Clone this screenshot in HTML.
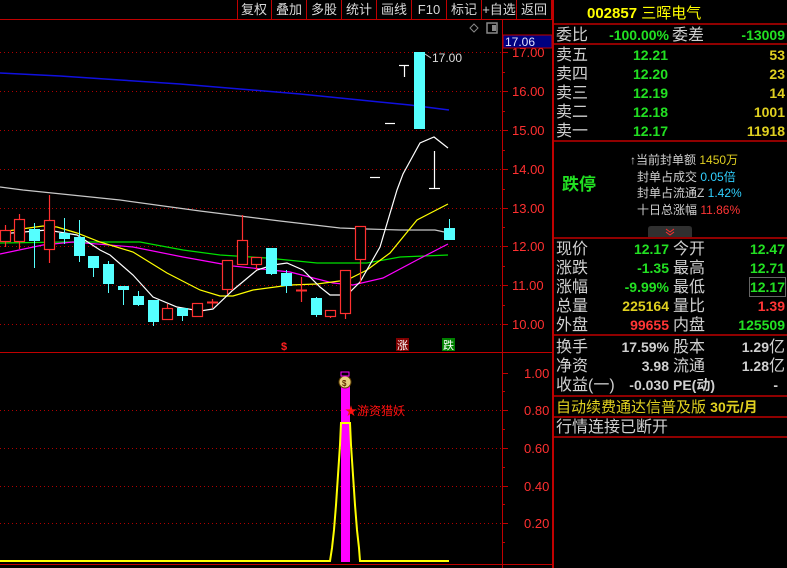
<!DOCTYPE html>
<html><head><meta charset="utf-8"><style>
html,body{margin:0;padding:0;background:#000;width:787px;height:568px;overflow:hidden}
svg{display:block}
text{font-family:"Liberation Sans","Noto Sans CJK SC",sans-serif}
</style></head><body>
<svg width="787" height="568" viewBox="0 0 787 568" xmlns="http://www.w3.org/2000/svg">
<rect width="787" height="568" fill="#000"/>
<!-- toolbar -->
<g stroke="#c00000" stroke-width="1" fill="none">
<line x1="0" y1="19.5" x2="553" y2="19.5"/>
<line x1="237.5" y1="0" x2="237.5" y2="19"/><line x1="271.5" y1="0" x2="271.5" y2="19"/><line x1="306.5" y1="0" x2="306.5" y2="19"/><line x1="341.5" y1="0" x2="341.5" y2="19"/><line x1="376.5" y1="0" x2="376.5" y2="19"/><line x1="411.5" y1="0" x2="411.5" y2="19"/><line x1="446.5" y1="0" x2="446.5" y2="19"/><line x1="481.5" y1="0" x2="481.5" y2="19"/><line x1="516.5" y1="0" x2="516.5" y2="19"/><line x1="551.5" y1="0" x2="551.5" y2="19"/>
</g>
<g fill="#d8d8d8" font-size="13" text-anchor="middle">
<text x="254" y="14">复权</text><text x="289" y="14">叠加</text><text x="324" y="14">多股</text><text x="359" y="14">统计</text><text x="394" y="14">画线</text><text x="429" y="14">F10</text><text x="464" y="14">标记</text><text x="499" y="14">+自选</text><text x="534" y="14">返回</text>
</g>
<!-- axis -->
<line x1="502.5" y1="20" x2="502.5" y2="568" stroke="#c00000"/>
<line x1="553" y1="0" x2="553" y2="568" stroke="#c00000" stroke-width="2"/>
<line x1="0" y1="352.5" x2="553" y2="352.5" stroke="#c00000"/>
<line x1="0" y1="564.5" x2="553" y2="564.5" stroke="#c00000"/>
<!-- grid dotted -->
<g stroke="#b00000" stroke-dasharray="1,3">
<line x1="0" y1="52.5" x2="502" y2="52.5"/><line x1="0" y1="91.5" x2="502" y2="91.5"/><line x1="0" y1="130.5" x2="502" y2="130.5"/><line x1="0" y1="169.5" x2="502" y2="169.5"/><line x1="0" y1="208.5" x2="502" y2="208.5"/><line x1="0" y1="246.5" x2="502" y2="246.5"/><line x1="0" y1="285.5" x2="502" y2="285.5"/><line x1="0" y1="324.5" x2="502" y2="324.5"/>
<line x1="0" y1="410.5" x2="502" y2="410.5"/><line x1="0" y1="448.5" x2="502" y2="448.5"/><line x1="0" y1="486.5" x2="502" y2="486.5"/><line x1="0" y1="523.5" x2="502" y2="523.5"/>
</g>
<!-- axis ticks and labels -->
<g stroke="#c00000">
<line x1="502" y1="52.5" x2="508" y2="52.5"/><line x1="502" y1="72.5" x2="505" y2="72.5"/><line x1="502" y1="91.5" x2="508" y2="91.5"/><line x1="502" y1="111.5" x2="505" y2="111.5"/><line x1="502" y1="130.5" x2="508" y2="130.5"/><line x1="502" y1="150.5" x2="505" y2="150.5"/><line x1="502" y1="169.5" x2="508" y2="169.5"/><line x1="502" y1="189.5" x2="505" y2="189.5"/><line x1="502" y1="208.5" x2="508" y2="208.5"/><line x1="502" y1="227.5" x2="505" y2="227.5"/><line x1="502" y1="246.5" x2="508" y2="246.5"/><line x1="502" y1="266.5" x2="505" y2="266.5"/><line x1="502" y1="285.5" x2="508" y2="285.5"/><line x1="502" y1="305.5" x2="505" y2="305.5"/><line x1="502" y1="324.5" x2="508" y2="324.5"/>
<line x1="502" y1="373.5" x2="508" y2="373.5"/><line x1="502" y1="391.5" x2="505" y2="391.5"/><line x1="502" y1="410.5" x2="508" y2="410.5"/><line x1="502" y1="429.5" x2="505" y2="429.5"/><line x1="502" y1="448.5" x2="508" y2="448.5"/><line x1="502" y1="467.5" x2="505" y2="467.5"/><line x1="502" y1="486.5" x2="508" y2="486.5"/><line x1="502" y1="504.5" x2="505" y2="504.5"/><line x1="502" y1="523.5" x2="508" y2="523.5"/><line x1="502" y1="542.5" x2="505" y2="542.5"/>
</g>
<g fill="#ff3030" font-size="13">
<text x="512" y="57">17.00</text><text x="512" y="96">16.00</text><text x="512" y="135">15.00</text><text x="512" y="174">14.00</text><text x="512" y="213">13.00</text><text x="512" y="251">12.00</text><text x="512" y="290">11.00</text><text x="512" y="329">10.00</text>
<text x="524" y="378">1.00</text><text x="524" y="415">0.80</text><text x="524" y="453">0.60</text><text x="524" y="491">0.40</text><text x="524" y="528">0.20</text>
</g>
<rect x="503" y="35" width="49" height="13" fill="#000080" stroke="#c00000"/>
<text x="505" y="46" fill="#e0e0ff" font-size="12">17.06</text>
<!-- top icons -->
<path d="M474 24 L478 28 L474 32 L470 28 Z" fill="none" stroke="#888"/>
<rect x="487" y="23" width="10" height="10" fill="none" stroke="#888" stroke-width="1.5"/><rect x="492" y="25" width="4" height="6" fill="#888"/>
<!-- MA lines -->
<polyline fill="none" stroke="#1010e0" stroke-width="1.5" points="0,73 60,76 120,80 180,84 240,89 300,94 360,100 410,105 449,110"/>
<polyline fill="none" stroke="#c8c8c8" stroke-width="1.2" points="0,187 23,190 120,200 200,211 280,221 340,228 367,229 400,230 435,230 449,233"/>
<polyline fill="none" stroke="#00e000" stroke-width="1.2" points="0,243 67,242 140,242 183,250 220,255 267,258 317,263 367,263 400,257 448,255"/>
<polyline fill="none" stroke="#ff00ff" stroke-width="1.2" points="0,254 43,245 73,242 133,247 183,257 233,266 290,272 333,283 353,285 383,278 417,260 448,244"/>
<polyline fill="none" stroke="#ffff00" stroke-width="1.2" points="0,232 43,226 57,227 77,233 100,242 133,252 167,273 200,290 220,296 233,296 253,290 290,285 317,284 347,280 367,270 390,253 417,220 448,204"/>
<polyline fill="none" stroke="#ffffff" stroke-width="1.2" points="0,234 47,230 77,235 100,250 110,255 133,275 153,297 177,307 200,311 213,309 233,290 257,270 273,265 287,263 303,270 320,287 330,295 347,295 360,282 380,247 397,190 403,174 420,143 434,137 448,148"/>
<!-- candles: red hollow -->
<g stroke="#ff3030" stroke-width="1.2" fill="#000">
<line x1="5.5" y1="225" x2="5.5" y2="247"/><rect x="0.5" y="230.5" width="10" height="11"/>
<line x1="19.5" y1="214" x2="19.5" y2="249"/><rect x="14.5" y="219.5" width="10" height="22"/>
<line x1="49.5" y1="195" x2="49.5" y2="263"/><rect x="44.5" y="220.5" width="10" height="29"/>
<line x1="167.5" y1="304" x2="167.5" y2="308"/><rect x="162.5" y="308.5" width="10" height="11"/>
<rect x="192.5" y="303.5" width="10" height="13"/>
<line x1="212.5" y1="299" x2="212.5" y2="308"/><line x1="207" y1="302.5" x2="218" y2="302.5" stroke-width="2"/>
<line x1="227.5" y1="289" x2="227.5" y2="294"/><rect x="222.5" y="260.5" width="10" height="29"/>
<line x1="242.5" y1="215" x2="242.5" y2="240"/><rect x="237.5" y="240.5" width="10" height="24"/>
<line x1="256.5" y1="264" x2="256.5" y2="270"/><rect x="251.5" y="257.5" width="10" height="7"/>
<line x1="301.5" y1="277" x2="301.5" y2="302"/><line x1="296" y1="290.5" x2="307" y2="290.5" stroke-width="2"/>
<line x1="330.5" y1="316" x2="330.5" y2="318"/><rect x="325.5" y="310.5" width="10" height="6"/>
<line x1="345.5" y1="313" x2="345.5" y2="319"/><rect x="340.5" y="270.5" width="10" height="43"/>
<line x1="360.5" y1="259" x2="360.5" y2="283"/><rect x="355.5" y="226.5" width="10" height="33"/>
</g>
<!-- cyan candles -->
<g fill="#55ffff" stroke="#55ffff">
<line x1="34.5" y1="223" x2="34.5" y2="268"/><rect x="29" y="229" width="11" height="12" stroke="none"/>
<line x1="64.5" y1="218" x2="64.5" y2="244"/><rect x="59" y="233" width="11" height="6" stroke="none"/>
<line x1="79.5" y1="220" x2="79.5" y2="262"/><rect x="74" y="237" width="11" height="19" stroke="none"/>
<line x1="93.5" y1="256" x2="93.5" y2="277"/><rect x="88" y="256" width="11" height="12" stroke="none"/>
<line x1="108.5" y1="261" x2="108.5" y2="293"/><rect x="103" y="264" width="11" height="20" stroke="none"/>
<line x1="123.5" y1="286" x2="123.5" y2="305"/><rect x="118" y="286" width="11" height="4" stroke="none"/>
<line x1="138.5" y1="291" x2="138.5" y2="306"/><rect x="133" y="296" width="11" height="9" stroke="none"/>
<line x1="153.5" y1="300" x2="153.5" y2="326"/><rect x="148" y="300" width="11" height="22" stroke="none"/>
<line x1="182.5" y1="308" x2="182.5" y2="321"/><rect x="177" y="308" width="11" height="8" stroke="none"/>
<line x1="271.5" y1="248" x2="271.5" y2="275"/><rect x="266" y="248" width="11" height="26" stroke="none"/>
<line x1="286.5" y1="270" x2="286.5" y2="293"/><rect x="281" y="273" width="11" height="13" stroke="none"/>
<line x1="316.5" y1="297" x2="316.5" y2="317"/><rect x="311" y="298" width="11" height="17" stroke="none"/>
<rect x="414" y="52" width="11" height="77" stroke="none"/>
<line x1="449.5" y1="219" x2="449.5" y2="228"/><rect x="444" y="228" width="11" height="12" stroke="none"/>
</g>
<g stroke="#ffffff" stroke-width="1.2">
<line x1="370" y1="177.5" x2="380" y2="177.5"/><line x1="385" y1="123.5" x2="395" y2="123.5"/>
<line x1="399" y1="65.5" x2="409" y2="65.5"/><line x1="404.5" y1="65" x2="404.5" y2="77"/>
<line x1="434.5" y1="151" x2="434.5" y2="188"/><line x1="429" y1="188.5" x2="440" y2="188.5"/>
</g>
<text x="432" y="62" fill="#dddddd" font-size="12">17.00</text>
<line x1="425" y1="54" x2="431" y2="58" stroke="#ccc"/>
<!-- markers -->
<text x="281" y="350" fill="#ff2020" font-size="11" font-weight="bold">$</text>
<rect x="396" y="338" width="13" height="13" fill="#800000"/><text x="397" y="349" fill="#fff" font-size="11">涨</text>
<rect x="442" y="338" width="13" height="13" fill="#008000"/><text x="443" y="349" fill="#fff" font-size="11">跌</text>
<!-- lower panel -->
<rect x="341" y="379" width="9" height="183" fill="#ff00ff"/>
<polyline fill="none" stroke="#ffff00" stroke-width="2" points="0,561 330,561 332,548 334,530 336,505 338,475 340,445 341,423 350,423 351,445 353,475 355,505 357,530 359,548 360,561 449,561"/>
<circle cx="345" cy="382" r="6" fill="#e8d080" stroke="#604000"/><rect x="341" y="372" width="8" height="4" fill="none" stroke="#ff00ff"/>
<text x="342" y="386" fill="#603000" font-size="8" font-weight="bold">$</text>
<text x="345" y="415" fill="#ff1010" font-size="12">★游资猎妖</text>
<!-- right panel -->
<g stroke="#c00000" stroke-width="1.5">
<line x1="554" y1="24" x2="787" y2="24"/><line x1="554" y1="44" x2="787" y2="44"/><line x1="554" y1="141" x2="787" y2="141"/><line x1="554" y1="238" x2="787" y2="238"/><line x1="554" y1="335" x2="787" y2="335"/><line x1="554" y1="396" x2="787" y2="396"/><line x1="554" y1="417" x2="787" y2="417"/><line x1="554" y1="437" x2="787" y2="437"/>
</g>
<text x="587" y="18" fill="#ffff00" font-size="15" font-weight="bold">002857 <tspan font-weight="normal">三晖电气</tspan></text>
<g font-size="16" fill="#d0d0d0">
<text x="556" y="40">委比</text><text x="672" y="40">委差</text>
<text x="556" y="60">卖五</text><text x="556" y="79">卖四</text><text x="556" y="98">卖三</text><text x="556" y="117">卖二</text><text x="556" y="136">卖一</text>
<text x="556" y="254">现价</text><text x="673" y="254">今开</text>
<text x="556" y="273">涨跌</text><text x="673" y="273">最高</text>
<text x="556" y="292">涨幅</text><text x="673" y="292">最低</text>
<text x="556" y="311">总量</text><text x="673" y="311">量比</text>
<text x="556" y="330">外盘</text><text x="673" y="330">内盘</text>
<text x="556" y="352">换手</text><text x="673" y="352">股本</text>
<text x="556" y="371">净资</text><text x="673" y="371">流通</text>
<text x="556" y="390">收益(一)</text><text x="673" y="390" font-size="14" font-weight="bold">PE(动)</text>
<text x="556" y="432">行情连接已断开</text>
</g>
<g font-size="14" font-weight="bold" text-anchor="end">
<text x="669" y="40" fill="#22e022">-100.00%</text><text x="785" y="40" fill="#22e022">-13009</text>
<text x="668" y="60" fill="#22e022">12.21</text><text x="785" y="60" fill="#e0d020">53</text>
<text x="668" y="79" fill="#22e022">12.20</text><text x="785" y="79" fill="#e0d020">23</text>
<text x="668" y="98" fill="#22e022">12.19</text><text x="785" y="98" fill="#e0d020">14</text>
<text x="668" y="117" fill="#22e022">12.18</text><text x="785" y="117" fill="#e0d020">1001</text>
<text x="668" y="136" fill="#22e022">12.17</text><text x="785" y="136" fill="#e0d020">11918</text>
<text x="669" y="254" fill="#22e022">12.17</text><text x="785" y="254" fill="#22e022">12.47</text>
<text x="669" y="273" fill="#22e022">-1.35</text><text x="785" y="273" fill="#22e022">12.71</text>
<text x="669" y="292" fill="#22e022">-9.99%</text><text x="785" y="292" fill="#22e022">12.17</text>
<text x="669" y="311" fill="#e0d020">225164</text><text x="785" y="311" fill="#ff3535">1.39</text>
<text x="669" y="330" fill="#ff3535">99655</text><text x="785" y="330" fill="#22e022">125509</text>
<text x="669" y="352" fill="#d0d0d0">17.59%</text><text x="785" y="352" fill="#d0d0d0">1.29<tspan font-weight="normal" font-size="16">亿</tspan></text>
<text x="669" y="371" fill="#d0d0d0">3.98</text><text x="785" y="371" fill="#d0d0d0">1.28<tspan font-weight="normal" font-size="16">亿</tspan></text>
<text x="669" y="390" fill="#d0d0d0">-0.030</text><text x="778" y="390" fill="#d0d0d0">-</text>
</g>
<rect x="749.5" y="277.5" width="36" height="19" fill="none" stroke="#666"/>
<text x="556" y="412" fill="#e0d020" font-size="15">自动续费通达信普及版 <tspan font-weight="bold" font-size="14">30元/月</tspan></text>
<text x="562" y="190" fill="#22e022" font-size="17" font-weight="bold">跌停</text>
<g font-size="12" fill="#d0d0d0">
<text x="630" y="164">↑当前封单额 <tspan fill="#e0d020">1450万</tspan></text>
<text x="637" y="181">封单占成交 <tspan fill="#30d0ff">0.05倍</tspan></text>
<text x="637" y="197">封单占流通Z <tspan fill="#30d0ff">1.42%</tspan></text>
<text x="637" y="214">十日总涨幅 <tspan fill="#ff3535">11.86%</tspan></text>
</g>
<path d="M648 237 L648 229 Q648 226 651 226 L689 226 Q692 226 692 229 L692 237 Z" fill="#303030"/>
<path d="M666 229 L670 232 L674 229 M666 232 L670 235 L674 232" fill="none" stroke="#ff3030"/>
</svg>
</body></html>
